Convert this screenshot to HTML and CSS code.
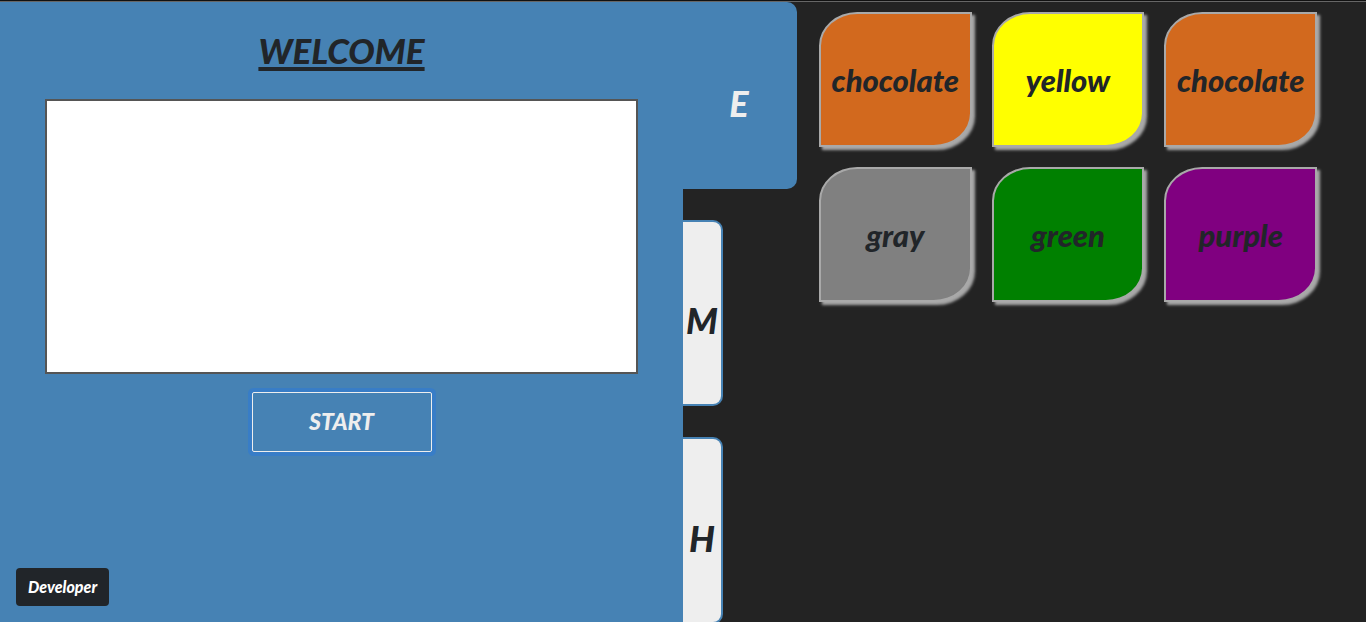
FILE: index.html
```html
<!DOCTYPE html>
<html lang="en">
<head>
<meta charset="utf-8">
<meta name="viewport" content="width=device-width, initial-scale=1">
<title>Color Game</title>
<link rel="stylesheet" href="styles.css">
</head>
<body>
<main class="game">
  <section class="panel">
    <h1 class="title">WELCOME</h1>
    <div class="display"></div>
    <button class="start" type="button">START</button>
    <button class="developer" type="button">Developer</button>
  </section>
  <nav class="levels" aria-label="Level">
    <button class="level level-active" type="button">E</button>
    <button class="level" type="button">M</button>
    <button class="level" type="button">H</button>
  </nav>
  <section class="board">
    <button class="card chocolate" type="button">chocolate</button>
    <button class="card yellow" type="button">yellow</button>
    <button class="card chocolate" type="button">chocolate</button>
    <button class="card gray" type="button">gray</button>
    <button class="card green" type="button">green</button>
    <button class="card purple" type="button">purple</button>
  </section>
</main>
</body>
</html>
```

FILE: styles.css
```css
* {
  box-sizing: border-box;
}

body {
  margin: 0;
  height: 100vh;
  overflow: hidden;
  background: #232323;
  color: #212529;
  font-family: Lato, "Open Sans", sans-serif;
  font-style: italic;
  font-weight: 900;
}

button {
  font: inherit;
  color: inherit;
  cursor: pointer;
}

.game {
  display: grid;
  grid-template-columns: 50% 114px 1fr;
  grid-template-rows: 100%;
  height: 100vh;
  border-top: 2px groove #666;
}

.panel {
  display: flex;
  flex-direction: column;
  align-items: center;
  padding: 24px 45px 16px;
  background: #4682b4;
}

.title {
  margin: 0 0 25px;
  font-size: 35px;
  line-height: 48px;
  font-weight: 900;
  text-decoration: underline;
  text-decoration-thickness: 4px;
  text-underline-offset: 3px;
  text-decoration-skip-ink: none;
}

.display {
  width: 100%;
  height: 275px;
  border: 2px solid #555;
  background: #fff;
}

.start {
  width: 180px;
  height: 60px;
  margin-top: 18px;
  padding: 0 0 3px;
  border: 1px solid #eee;
  border-radius: 2px;
  background: #4682b4;
  color: #eee;
  font-size: 23px;
  box-shadow: 0 0 0 4px #387dc7;
}

.developer {
  align-self: flex-start;
  margin-top: auto;
  margin-left: -29px;
  padding: 0 12px;
  border: 0;
  border-radius: 4px;
  background: #212529;
  color: #fff;
  font-size: 16px;
  line-height: 38px;
}

.levels {
  display: flex;
  flex-direction: column;
  align-items: flex-start;
  gap: 5vh;
}

.level {
  flex: none;
  width: 40px;
  height: 30vh;
  padding: 15px 0 0;
  border: 2px solid #4682b4;
  border-left: 0;
  border-radius: 0 10px 10px 0;
  background: #eee;
  font-size: 36px;
  text-align: center;
}

.level-active {
  width: 100%;
  background: #4682b4;
  color: #eee;
}

.board {
  display: grid;
  grid-template-columns: repeat(3, 1fr);
  grid-auto-rows: 135px;
  align-content: start;
  gap: 20px;
  padding: 10px 49px 10px 22px;
}

.card {
  min-width: 0;
  padding: 0;
  border: 2px solid #a9a9a9;
  border-radius: 25% 0;
  box-shadow: 3px 3px 3px #a9a9a9;
  font-size: 31px;
}

.chocolate { background: chocolate; }
.yellow { background: yellow; }
.gray { background: gray; }
.green { background: green; }
.purple { background: purple; }
```
